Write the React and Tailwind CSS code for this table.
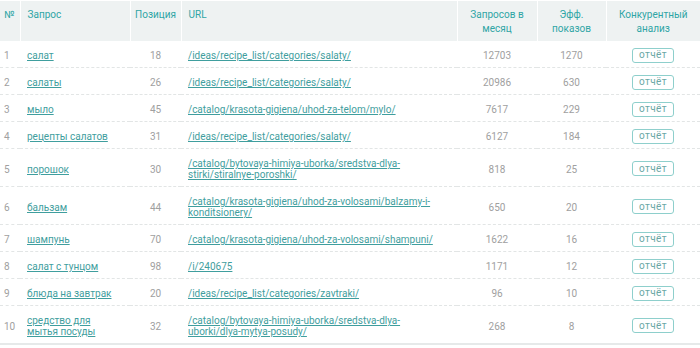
import React from "react";

const rows = [
  { n: 1, q: "салат", p: 18, url: "/ideas/recipe_list/categories/salaty/", m: 12703, e: 1270 },
  { n: 2, q: "салаты", p: 26, url: "/ideas/recipe_list/categories/salaty/", m: 20986, e: 630 },
  { n: 3, q: "мыло", p: 45, url: "/catalog/krasota-gigiena/uhod-za-telom/mylo/", m: 7617, e: 229 },
  { n: 4, q: "рецепты салатов", p: 31, url: "/ideas/recipe_list/categories/salaty/", m: 6127, e: 184 },
  { n: 5, q: "порошок", p: 30, url: "/catalog/bytovaya-himiya-uborka/sredstva-dlya-stirki/stiralnye-poroshki/", m: 818, e: 25 },
  { n: 6, q: "бальзам", p: 44, url: "/catalog/krasota-gigiena/uhod-za-volosami/balzamy-i-konditsionery/", m: 650, e: 20 },
  { n: 7, q: "шампунь", p: 70, url: "/catalog/krasota-gigiena/uhod-za-volosami/shampuni/", m: 1622, e: 16 },
  { n: 8, q: "салат с тунцом", p: 98, url: "/i/240675", m: 1171, e: 12 },
  { n: 9, q: "блюда на завтрак", p: 20, url: "/ideas/recipe_list/categories/zavtraki/", m: 96, e: 10 },
  { n: 10, q: "средство для мытья посуды", p: 32, url: "/catalog/bytovaya-himiya-uborka/sredstva-dlya-uborki/dlya-mytya-posudy/", m: 268, e: 8 },
];

export default function App() {
  return (
    <div className="w-[700px] h-[348px] bg-white pt-px" style={{ fontFamily: "Roboto, 'Liberation Sans', sans-serif" }}>
      <table className="w-[700px] table-fixed border-collapse text-[10px] leading-[11px]">
        <colgroup>
          <col className="w-[20px]" />
          <col className="w-[110px]" />
          <col className="w-[51px]" />
          <col className="w-[276px]" />
          <col className="w-[80px]" />
          <col className="w-[69px]" />
          <col className="w-[94px]" />
        </colgroup>
        <thead>
          <tr className="bg-[#eef2f2] text-[#2fa5a5] h-[40px] align-top leading-[14px]">
            <th className="font-normal text-left pl-[4px] pt-[7px] border-r border-white">№</th>
            <th className="font-normal text-left pl-[7px] pt-[7px] border-r border-white">Запрос</th>
            <th className="font-normal text-center pt-[7px] border-r border-white">Позиция</th>
            <th className="font-normal text-left pl-[7px] pt-[7px] border-r border-white">URL</th>
            <th className="font-normal text-center pt-[7px] px-[8px] border-r border-white">Запросов в месяц</th>
            <th className="font-normal text-center pt-[7px] px-[8px] border-r border-white">Эфф. показов</th>
            <th className="font-normal text-center pt-[7px] px-[4px]">Конкурентный анализ</th>
          </tr>
        </thead>
        <tbody>
          {rows.map((r, i) => (
            <tr
              key={r.n}
              className={
                i === rows.length - 1
                  ? "border-b-2 border-solid border-[#e6e9e9]"
                  : "border-b border-dashed border-[#e2e5e5]"
              }
            >
              <td className="pl-[4px] pt-[9px] pb-[6px] text-[#a0a0a0] align-middle">{r.n}</td>
              <td className="pl-[7px] pr-[12px] pt-[9px] pb-[6px] align-middle">
                <a href="#" className="text-[#3f9e9e] underline underline-offset-1">{r.q}</a>
              </td>
              <td className="text-center text-[#a0a0a0] align-middle pt-[9px] pb-[6px]">{r.p}</td>
              <td className="pl-[7px] pr-[14px] pt-[9px] pb-[6px] align-middle">
                <a href="#" className="text-[#3f9e9e] underline underline-offset-1">{r.url}</a>
              </td>
              <td className="text-center text-[#a0a0a0] align-middle pt-[9px] pb-[6px]">{r.m}</td>
              <td className="text-center text-[#a0a0a0] align-middle pt-[9px] pb-[6px]">{r.e}</td>
              <td className="text-center align-middle pt-[2px]">
                <span className="inline-flex items-center justify-center w-[42px] h-[15px] border border-[#8ecfcc] rounded-[3px] text-[10px] leading-none text-[#6aa7a5] tracking-[0.4px]">
                  отчёт
                </span>
              </td>
            </tr>
          ))}
        </tbody>
      </table>
    </div>
  );
}
